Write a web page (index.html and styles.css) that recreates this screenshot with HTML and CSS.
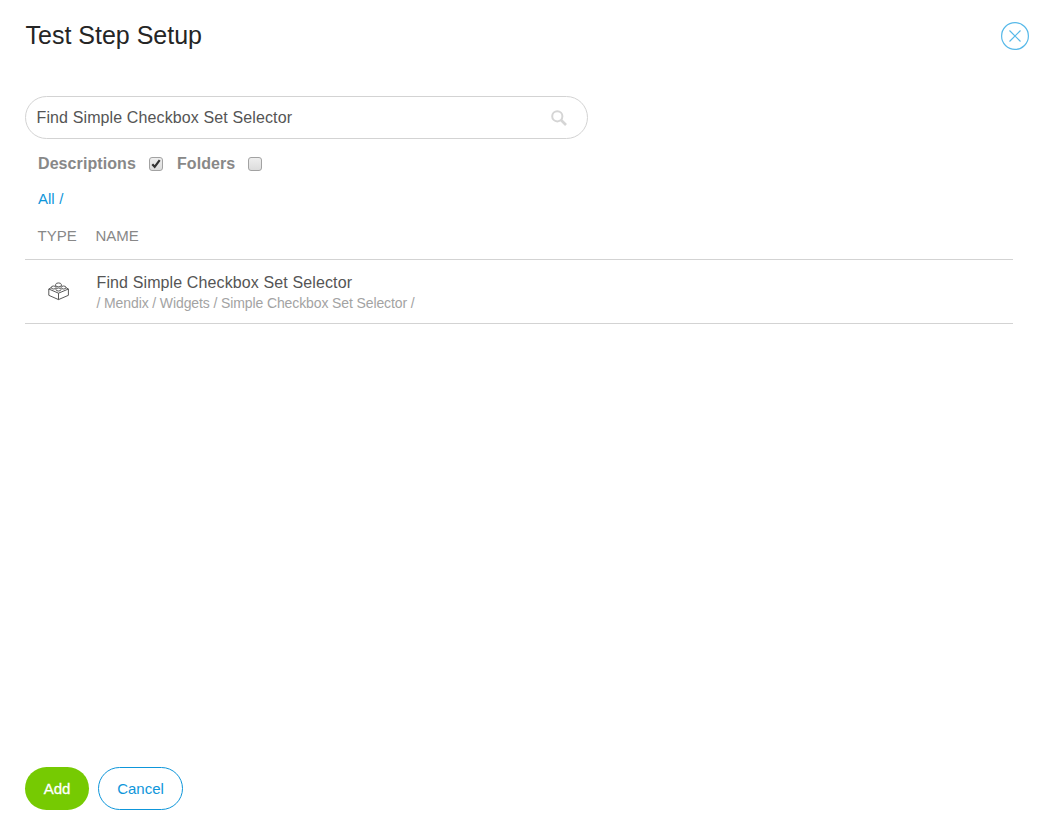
FILE: index.html
```html
<!DOCTYPE html>
<html lang="en">
<head>
<meta charset="utf-8">
<title>Test Step Setup</title>
<link rel="stylesheet" href="styles.css">
</head>
<body>
<main class="dialog">
  <header class="header">
    <h1 class="title">Test Step Setup</h1>
    <button class="close" aria-label="Close">
      <svg width="28" height="28" viewBox="0 0 28 28"><circle cx="14" cy="14" r="13.4"/><path d="M8.5 8.5l11 11M19.5 8.500l-11 11"/></svg>
    </button>
  </header>
  <div class="search">
    <span class="query">Find Simple Checkbox Set Selector</span>
    <svg class="lens" width="16" height="16" viewBox="0 0 16 16"><circle cx="6.3" cy="6.3" r="5.1"/><path d="M10 10l5 5"/></svg>
  </div>
  <div class="filters">
    <span class="filter-label descriptions">Descriptions</span>
    <span class="box"><svg width="12" height="12" viewBox="0 0 12 12"><path d="M2.3 6.2l2.4 2.6 5-6.6"/></svg></span>
    <span class="filter-label folders">Folders</span>
    <span class="box"></span>
  </div>
  <nav class="crumbs"><a>All</a> <span>/</span></nav>
  <section class="list">
    <div class="row head"><span class="type">TYPE</span><span class="name">NAME</span></div>
    <div class="row item">
      <svg class="brick" width="22" height="19" viewBox="0 0 22 19"><path d="M3.500 5.500L.8 7v6.300l9.700 4.300 9.900-4.300V7l-2.700-1.500M.8 7l9.700 4.200L20.400 7M10.500 11.200v6.400"/><path d="M7.700 4V2.300c0-1.800 5.600-1.800 5.600 0V4c-1.200 1-4.400 1-5.600 0"/><ellipse cx="5.600" cy="5.500" rx="2.400" ry="1.500"/><ellipse cx="15.600" cy="5.500" rx="2.400" ry="1.500"/><ellipse cx="10.500" cy="7.500" rx="2.500" ry="1.500"/></svg>
      <div><div class="item-name">Find Simple Checkbox Set Selector</div><div class="path">/ Mendix / Widgets / Simple Checkbox Set Selector /</div></div>
    </div>
  </section>
  <footer class="footer"><button class="btn add">Add</button><button class="btn cancel">Cancel</button></footer>
</main>
</body>
</html>
```

FILE: styles.css
```css
* { box-sizing: border-box; }
body { margin: 0; background: #fff; font-family: "Liberation Sans", Arial, sans-serif; }
button { font-family: inherit; padding: 0; }
svg { display: block; fill: none; }
.dialog { height: 837px; padding: 22px 27px 27px 25px; display: flex; flex-direction: column; }
.header { display: flex; justify-content: space-between; height: 28px; margin-bottom: 46px; }
.title { margin: 0; padding-left: .5px; font-size: 25px; font-weight: 400; line-height: 26px; color: #252525; }
.close { width: 28px; height: 28px; border: 0; background: none; }
.close svg { stroke: #57b9e9; stroke-width: 1.2; }
.search { width: 563px; height: 43px; border: 1px solid #d3d3d3; border-radius: 22px; padding: 0 20.5px 0 10.5px; display: flex; align-items: center; justify-content: space-between; font-size: 16px; color: #555; }
.query, .item-name { letter-spacing: .12px; }
.lens { stroke: #d5d5d5; stroke-width: 2; }
.lens path { stroke-width: 2.6; }
.filters { height: 20px; margin: 15px 0 0 13px; display: flex; align-items: center; font-size: 16px; font-weight: 700; color: #888; letter-spacing: .08px; }
.descriptions { width: 111px; }
.folders { width: 71px; margin-left: 14px; }
.box { width: 14px; height: 14px; border: 1px solid #a2a2a2; border-radius: 3px; background: linear-gradient(#eee, #dcdcdc); }
.box svg { stroke: #333; stroke-width: 2.2; }
.crumbs { height: 20px; margin: 15px 0 0 13px; font-size: 15px; line-height: 20px; color: #0e96da; }
.crumbs span { margin-left: .5px; }
.list { width: 988px; margin-top: 8px; }
.row { display: flex; border-bottom: 1px solid #d3d3d3; }
.head { height: 43px; padding: 9px 0 0 12.5px; font-size: 15px; line-height: 20px; color: #888; }
.type { width: 58px; }
.item { height: 64px; padding: 13px 0 0 23px; }
.brick { margin: 9px 26.5px 0 0; stroke: #505050; stroke-width: .95; }
.item-name { font-size: 16px; line-height: 20px; color: #555; }
.path { font-size: 14px; line-height: 20px; letter-spacing: -.11px; color: #a3a3a3; }
.footer { display: flex; gap: 9px; margin-top: auto; }
.btn { height: 43px; border-radius: 22px; font-size: 15px; }
.add { width: 64px; border: 0; background: #76ca02; color: #fff; -webkit-text-stroke: .3px #fff; }
.cancel { width: 85px; border: 1px solid #0e96da; background: #fff; color: #0e96da; }
```
